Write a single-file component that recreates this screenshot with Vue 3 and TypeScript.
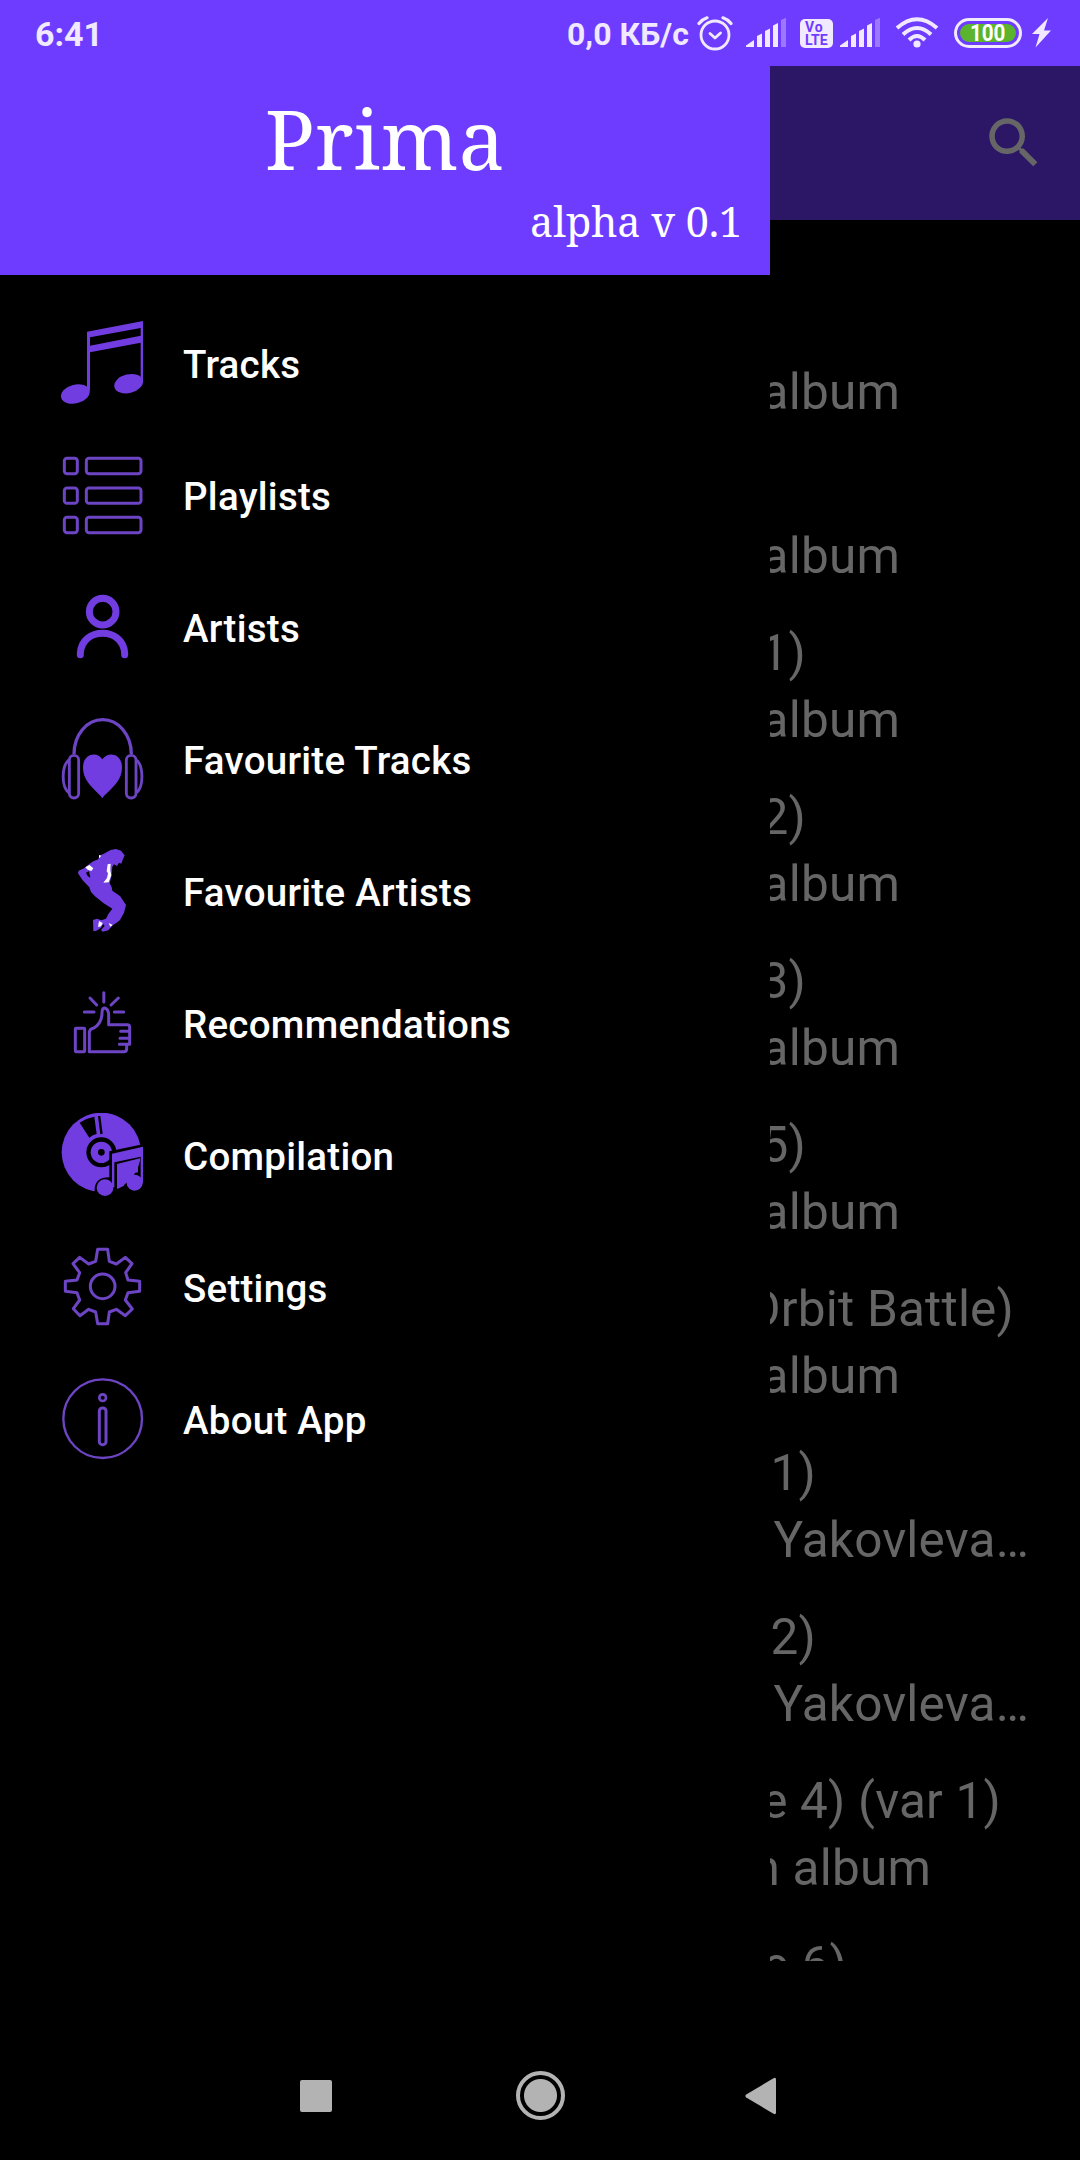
<script setup lang="ts">
interface MenuEntry {
  id: string
  label: string
  viewBox: string
}

interface Line {
  text: string
  inset: number
}

interface Track {
  title: Line | null
  album: Line
}

const menu: MenuEntry[] = [
  { id: 'tracks', label: 'Tracks', viewBox: '60 63 252 252' },
  { id: 'playlists', label: 'Playlists', viewBox: '60 459 252 252' },
  { id: 'artists', label: 'Artists', viewBox: '60 45 252 252' },
  { id: 'fav-tracks', label: 'Favourite Tracks', viewBox: '60 441 252 252' },
  { id: 'fav-artists', label: 'Favourite Artists', viewBox: '60 57 252 252' },
  { id: 'recommendations', label: 'Recommendations', viewBox: '60 453 252 252' },
  { id: 'compilation', label: 'Compilation', viewBox: '60 69 252 252' },
  { id: 'settings', label: 'Settings', viewBox: '60 465 252 252' },
  { id: 'about', label: 'About App', viewBox: '60 861 252 252' },
]

const album: Line = { text: 'album', inset: 180 }
const performer: Line = { text: 'Yakovleva…', inset: 51 }

const tracks: Track[] = [
  { title: null, album },
  { title: null, album },
  { title: { text: '1)', inset: 274 }, album },
  { title: { text: '2)', inset: 274 }, album },
  { title: { text: '3)', inset: 274 }, album },
  { title: { text: '5)', inset: 274 }, album },
  { title: { text: 'Orbit Battle)', inset: 66 }, album },
  { title: { text: '1)', inset: 264 }, album: performer },
  { title: { text: '2)', inset: 264 }, album: performer },
  { title: { text: 'e 4) (var 1)', inset: 79 }, album: { text: 'n album', inset: 149 } },
  { title: { text: 'e 6)', inset: 233 }, album },
]
</script>

<template>
  <div class="screen">
    <header class="status">
      <span class="clock">6:41</span>
      <span class="speed">0,0 КБ/с</span>
      <svg class="alarm" width="36" height="36" viewBox="0 0 36 36" fill="none" stroke="currentColor" stroke-linecap="round">
        <circle cx="18" cy="20" r="14" stroke-width="2.8" />
        <path d="M13 18.5l5 4.5 5.5-5" stroke-width="2.8" stroke-linejoin="round" />
        <path d="M2 8.5Q5 4.5 10 2.8M34 8.5Q31 4.5 26 2.8" stroke-width="3.200" />
      </svg>
      <svg class="signal first" width="40" height="30" viewBox="0 0 40 30" fill="currentColor">
        <path d="M0 29V27.5L8 22V29zM11 18l5-2.5V29h-5zM19 13l5-2.5V29h-5zM27 7.500l5-2.5V29h-5z" />
        <path d="M35 2l5-2.300V29h-5z" opacity=".35" />
      </svg>
      <span class="volte"><b class="vo">Vo</b><b>LTE</b></span>
      <svg class="signal second" width="40" height="30" viewBox="0 0 40 30" fill="currentColor">
        <path d="M0 29V27.500L8 22V29zM11 18l5-2.5V29h-5zM19 13l5-2.5V29h-5zM27 7.500l5-2.5V29h-5z" />
        <path d="M35 2l5-2.300V29h-5z" opacity=".35" />
      </svg>
      <svg class="wifi" width="44" height="32" viewBox="0 0 44 32" fill="none" stroke="currentColor" stroke-width="4">
        <path d="M2 11Q22-6.500 42 11M8 17.500Q22 4.500 36 17.500M14 23Q22 15 30 23" />
        <circle cx="22" cy="27" r="3.600" fill="currentColor" stroke="none" />
      </svg>
      <span class="battery"><span class="charge"><span class="level">100</span></span></span>
      <svg class="bolt" width="20" height="30" viewBox="0 0 20 30" fill="currentColor">
        <path d="M16 0L0 16h7.500L3.500 29.500L19 12.500H12z" />
      </svg>
    </header>

    <div class="body">
      <aside class="drawer">
        <div class="brand">
          <h1>Prima</h1>
          <p>alpha v 0.1</p>
        </div>
        <nav class="menu">
          <a v-for="entry in menu" :key="entry.id" class="entry">
            <svg class="icon" :viewBox="entry.viewBox" fill="none" stroke="currentColor">
              <g v-if="entry.id === 'tracks'" stroke="none" fill="currentColor">
                <path d="M141 95L309 63V246H302V128L150 157V272H141z" />
                <path d="M150 112L302 84V107L150 137z" fill="#000" />
                <ellipse cx="106" cy="282" rx="44" ry="28" transform="rotate(-14 106 282)" />
                <ellipse cx="266" cy="251" rx="44" ry="28" transform="rotate(-14 266 251)" />
              </g>
              <g v-else-if="entry.id === 'playlists'" class="thin" stroke-width="9">
                <template v-for="y in [475, 564, 652]" :key="y">
                  <rect x="73" :y="y" width="39" height="46" rx="8" />
                  <rect x="139" :y="y" width="164" height="46" rx="8" />
                </template>
              </g>
              <g v-else-if="entry.id === 'artists'" stroke-width="21" stroke-linecap="round">
                <circle cx="188" cy="125" r="40" />
                <path d="M121 254V250C125 170 250 170 254 250V254" />
              </g>
              <g v-else-if="entry.id === 'fav-tracks'" class="thin" stroke-width="8.500">
                <path d="M102 552C102 495 140 449 188 449S274 495 274 552" stroke-width="10" />
                <rect x="88" y="556" width="28" height="128" rx="14" />
                <rect x="259" y="556" width="29" height="128" rx="14" />
                <path d="M86 570C64 590 64 650 86 668M290 570C311 590 311 650 290 668" />
                <path d="M187 685C172 662 129 640 129 592C129 551 172 543 187 568C204 543 246 551 246 592C246 640 203 662 187 685z" class="solid" />
              </g>
              <g v-else-if="entry.id === 'fav-artists'" stroke="none" fill="currentColor">
                <path d="M212 60L228 57L243 62L254 76L248 90L244 101L237 98L231 108L222 103L217 110L214 140L209 160L215 172L217 182L240 198L258 225L252 248L240 270L229 279L218 286L205 301L188 305L183 300L194 288L190 282L182 294L168 303L160 303L159 270L171 266L184 271L198 266L205 252L217 236L190 219L165 199L153 186L148 172L128 151L114 130L116 122L132 115L145 104L160 94L175 88L178 77L190 72z" />
                <path d="M138 128L147 124L151 143L143 138z" fill="#000" />
                <path d="M136 112L148 105L160 115L154 123L143 119zM203 103L212 101L211 120L214 136L206 157L190 158L201 144L204 130L200 124zM177 75L184 77L177 85zM177 273L188 279L183 289L174 291zM206 279L218 285L211 290z" fill="#fff" />
              </g>
              <g v-else-if="entry.id === 'recommendations'" class="thin" stroke-width="9" stroke-linecap="round" stroke-linejoin="round">
                <rect x="106" y="595" width="28" height="70" rx="2" />
                <path d="M148 665V606Q150 596 160 595Q187 580 186 546Q187 534 194 534Q206 537 206 556V584H262Q269 584 269 592V643H260V657Q260 665 252 665zM242 604H269M240 625H269M238 643H260" />
                <path d="M191.500 488V516M150 504L170 525M235 504L213 525M133 546H162M223 546H251" />
              </g>
              <g v-else-if="entry.id === 'compilation'" stroke="none" fill="currentColor">
                <circle cx="184" cy="187" r="119" />
                <path d="M119 98Q140 84 163 80L170 132Q158 134 148 143zM174 78L181 78L188 131L181 133z" fill="#000" />
                <circle cx="184" cy="187" r="45" fill="#000" />
                <circle cx="184" cy="187" r="32" />
                <circle cx="184" cy="187" r="10" fill="#000" />
                <path d="M208 184L320 160V310H304V260L300 205L231 222V298L160 325L164 303Q162 262 208 262z" fill="#000" />
                <path d="M232 226L294 211V247Q255 251 252 287L232 297z" />
                <path d="M216 191L309 170V280H302V200L223 217V292H216z" />
                <circle cx="284" cy="278" r="24" />
                <circle cx="195" cy="293" r="25" />
              </g>
              <g v-else-if="entry.id === 'settings'" class="thin" stroke-width="9" stroke-linejoin="round">
                <path d="M173 478H203L208 514L229 522L256 502L276 521L257 548L264 570L299 574V604L264 608L256 630L277 657L256 677L229 658L208 666L203 701H173L167 666L146 658L120 677L100 656L119 630L111 608L76 604V574L111 570L119 548L99 521L119 502L146 522L167 514z" />
                <circle cx="188" cy="589" r="37" />
              </g>
              <g v-else class="thin" stroke-width="7">
                <circle cx="188" cy="986" r="118" />
                <circle cx="188" cy="923" r="10" stroke-width="8" />
                <rect x="178" y="954" width="20" height="110" rx="9" stroke-width="9" />
              </g>
            </svg>
            <span class="label">{{ entry.label }}</span>
          </a>
        </nav>
      </aside>

      <main class="content">
        <div class="toolbar">
          <svg width="66" height="66" viewBox="0 0 24 24" fill="currentColor">
            <path d="M15.500 14h-.79l-.28-.27C15.410 12.590 16 11.110 16 9.500 16 5.910 13.090 3 9.500 3S3 5.910 3 9.500 5.910 16 9.500 16c1.610 0 3.090-.59 4.230-1.570l.27.28v.79l5 4.990L20.490 19l-4.990-5zm-6 0C7.010 14 5 11.990 5 9.500S7.010 5 9.500 5 14 7.010 14 9.500 11.990 14 9.500 14z" />
          </svg>
        </div>
        <div class="list">
          <div v-for="(track, i) in tracks" :key="i" class="track">
            <div class="line" :style="{ paddingRight: (track.title?.inset ?? 0) + 'px' }">{{ track.title?.text }}</div>
            <div class="line" :style="{ paddingRight: track.album.inset + 'px' }">{{ track.album.text }}</div>
          </div>
        </div>
      </main>
    </div>

    <footer class="navbar">
      <span class="recent"></span>
      <span class="home"></span>
      <svg class="back" width="32" height="38" viewBox="0 0 32 38" fill="currentColor">
        <path d="M31 2.500V35.500Q31 38 28.500 36.700L1.200 20.600Q-.5 19 1.200 17.400L28.500 1.300Q31 0 31 2.500z" />
      </svg>
    </footer>
  </div>
</template>

<style>
body {
  margin: 0;
  background: #000;
}
</style>

<style scoped>
.screen {
  width: 1080px;
  height: 2160px;
  display: flex;
  flex-direction: column;
  background: #000;
  overflow: hidden;
  font-family: Roboto, sans-serif;
}

.status {
  height: 66px;
  flex: none;
  box-sizing: border-box;
  padding-left: 35px;
  display: flex;
  align-items: center;
  background: #6e3cff;
  color: #f1e9ff;
}

.clock {
  width: 532px;
  font-size: 34px;
  font-weight: 700;
  line-height: 66px;
  padding-top: 2px;
}

.speed {
  width: 130px;
  font-size: 32px;
  font-weight: 700;
  line-height: 66px;
  white-space: nowrap;
  padding-top: 1px;
}

.alarm {
  flex: none;
}

.signal {
  flex: none;
  margin-left: 13px;
  overflow: visible;
}

.volte {
  width: 33px;
  height: 29px;
  margin-left: 14px;
  flex: none;
  border-radius: 5px;
  background: #f1e9ff;
  color: #6e3cff;
  display: flex;
  flex-direction: column;
  justify-content: center;
  box-sizing: border-box;
  padding: 1px 0 0 5px;
  font-size: 14px;
  line-height: 13px;
}

.vo {
  letter-spacing: 1px;
}

.second {
  margin-left: 7px;
}

.wifi {
  flex: none;
  margin-left: 15px;
}

.battery {
  width: 68px;
  height: 30px;
  margin-left: 15px;
  box-sizing: border-box;
  flex: none;
  border: 3px solid #f1e9ff;
  border-radius: 15px;
  padding: 3px;
  display: flex;
}

.charge {
  flex: 1;
  border-radius: 9px;
  background: #5ab42d;
  color: #fff;
  font-weight: 700;
  font-size: 24px;
  line-height: 19px;
  text-align: center;
}

.level {
  display: inline-block;
  transform: scaleX(0.86);
}

.bolt {
  flex: none;
  margin-left: 10px;
}

.body {
  height: 1895px;
  flex: none;
  display: flex;
}

.drawer {
  width: 770px;
  flex: none;
}

.brand {
  height: 209px;
  box-sizing: border-box;
  padding-top: 17px;
  background: #6e3cff;
  color: #fff;
  font-family: "Noto Serif", "Droid Serif", "DejaVu Serif", serif;
}

.brand h1,
.brand p {
  margin: 0;
  font-weight: 400;
  white-space: nowrap;
}

.brand h1 {
  height: 110px;
  font-size: 82.500px;
  line-height: 110px;
  letter-spacing: 0.2px;
  text-align: center;
}

.brand p {
  height: 56px;
  padding-right: 28px;
  font-size: 41.250px;
  line-height: 56px;
  letter-spacing: -0.05px;
  text-align: right;
}

.menu {
  padding-top: 22px;
}

.entry {
  height: 132px;
  padding-left: 60px;
  display: flex;
  align-items: center;
}

.icon {
  width: 84px;
  height: 84px;
  flex: none;
  color: #713de0;
}

.thin {
  color: #6d45c4;
  stroke: #6d45c4;
}

.solid {
  fill: #713de0;
  stroke: none;
}

.label {
  margin-left: 39px;
  padding-top: 4px;
  color: #fff;
  font-size: 38.500px;
  font-weight: 500;
  line-height: 46px;
  letter-spacing: 0.26px;
}

.content {
  width: 310px;
  overflow: hidden;
}

.toolbar {
  height: 154px;
  box-sizing: border-box;
  padding-right: 33px;
  display: flex;
  align-items: center;
  justify-content: flex-end;
  background: #2c1766;
  color: #666;
}

.list {
  height: 1741px;
  overflow: hidden;
}

.track {
  height: 164px;
  box-sizing: border-box;
  padding-top: 72px;
}

.line {
  height: 67px;
  box-sizing: border-box;
  display: flex;
  justify-content: flex-end;
  color: #666;
  font-size: 49.500px;
  line-height: 67px;
  letter-spacing: 0.2px;
  white-space: nowrap;
}

.navbar {
  flex: 1;
  padding: 72px 0 2px 300px;
  display: flex;
  align-items: center;
  color: #b3b3b3;
}

.recent {
  width: 32px;
  height: 32px;
  border-radius: 2px;
  background: currentColor;
}

.home {
  width: 49px;
  height: 49px;
  margin: 0 180px 0 184px;
  box-sizing: border-box;
  border: 4px solid currentColor;
  border-radius: 50%;
  background: radial-gradient(circle, #b3b3b3 16px, transparent 17px);
}
</style>
